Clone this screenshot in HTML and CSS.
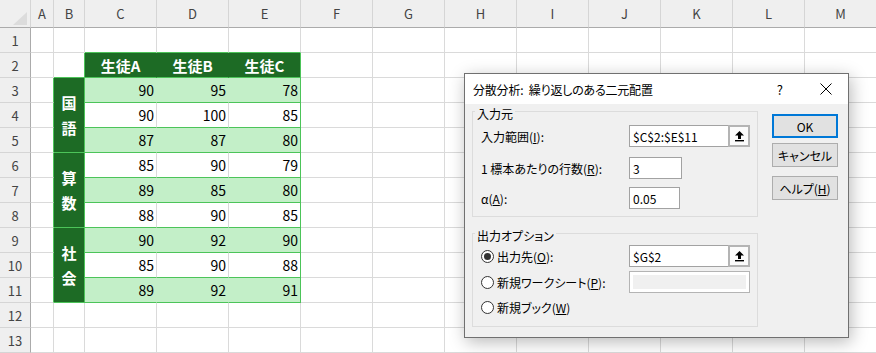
FILE: index.html
```html
<!DOCTYPE html>
<html lang="ja">
<head>
    <meta charset="UTF-8">
    <title>分散分析: 繰り返しのある二元配置</title>
    <link rel="stylesheet" href="styles.css">
</head>
<body>
    <!-- Worksheet -->
    <div class="sheet">
        <div class="corner"><svg width="30" height="27"><polygon points="27,12 27,25 13,25" fill="#dcdcdc"/></svg></div>
        <div class="col">A</div><div class="col">B</div><div class="col">C</div><div class="col">D</div><div class="col">E</div>
        <div class="col">F</div><div class="col">G</div><div class="col">H</div><div class="col">I</div><div class="col">J</div>
        <div class="col">K</div><div class="col">L</div><div class="col">M</div>

        <div class="row">1</div><div></div><div></div><div class="gb"></div><div class="gb"></div><div class="gb"></div><div class="rest"></div>

        <div class="row">2</div><div></div><div class="gb gr"></div>
        <div class="th">生徒A</div><div class="th">生徒B</div><div class="th end">生徒C</div><div class="rest"></div>

        <div class="row">3</div><div class="gr"></div><div class="subj">国<br>語</div>
        <div class="v g">90</div><div class="v g">95</div><div class="v g end">78</div><div class="rest"></div>
        <div class="row">4</div><div class="gr"></div>
        <div class="v">90</div><div class="v">100</div><div class="v end">85</div><div class="rest"></div>
        <div class="row">5</div><div class="gr"></div>
        <div class="v g">87</div><div class="v g">87</div><div class="v g end">80</div><div class="rest"></div>

        <div class="row">6</div><div class="gr"></div><div class="subj">算<br>数</div>
        <div class="v">85</div><div class="v">90</div><div class="v end">79</div><div class="rest"></div>
        <div class="row">7</div><div class="gr"></div>
        <div class="v g">89</div><div class="v g">85</div><div class="v g end">80</div><div class="rest"></div>
        <div class="row">8</div><div class="gr"></div>
        <div class="v">88</div><div class="v">90</div><div class="v end">85</div><div class="rest"></div>

        <div class="row">9</div><div class="gr"></div><div class="subj">社<br>会</div>
        <div class="v g">90</div><div class="v g">92</div><div class="v g end">90</div><div class="rest"></div>
        <div class="row">10</div><div class="gr"></div>
        <div class="v">85</div><div class="v">90</div><div class="v end">88</div><div class="rest"></div>
        <div class="row">11</div><div class="gr"></div>
        <div class="v g">89</div><div class="v g">92</div><div class="v g end">91</div><div class="rest"></div>

        <div class="row">12</div><div></div><div></div><div></div><div></div><div></div><div class="rest"></div>
        <div class="row">13</div><div></div><div></div><div></div><div></div><div></div><div class="rest"></div>
    </div>

    <!-- Analysis dialog -->
    <div class="dialog">
        <div class="titlebar">
            <span class="title">分散分析: 繰り返しのある二元配置</span>
            <span class="q">?</span>
            <svg class="close" width="12" height="12"><path d="M0.5 0.5 L11.5 11.5 M11.5 0.5 L0.5 11.5" stroke="#000" stroke-width="1"/></svg>
        </div>
        <div class="dlg-body">
            <div class="groups">
                <fieldset class="grp in">
                    <legend>入力元</legend>
                    <div class="field f1">
                        <label>入力範囲(<u>I</u>):</label>
                        <div class="range"><span>$C$2:$E$11</span><span class="pick"><svg width="11" height="12"><path d="M5.5 1 L10 5.5 H7 V9 H4 V5.5 H1 Z" fill="#000"/><rect x="1" y="10" width="9" height="1.4" fill="#000"/></svg></span></div>
                    </div>
                    <div class="field f2">
                        <label>1 標本あたりの行数(<u>R</u>):</label>
                        <div class="box w53">3</div>
                    </div>
                    <div class="field f3">
                        <label>α(<u>A</u>):</label>
                        <div class="box w51">0.05</div>
                    </div>
                </fieldset>
                <fieldset class="grp out">
                    <legend>出力オプション</legend>
                    <div class="field o1">
                        <span class="radio on"></span>
                        <label class="opt">出力先(<u>O</u>):</label>
                        <div class="range"><span>$G$2</span><span class="pick"><svg width="11" height="12"><path d="M5.5 1 L10 5.5 H7 V9 H4 V5.5 H1 Z" fill="#000"/><rect x="1" y="10" width="9" height="1.4" fill="#000"/></svg></span></div>
                    </div>
                    <div class="field o2">
                        <span class="radio"></span>
                        <label class="opt">新規ワークシート(<u>P</u>):</label>
                        <div class="range off"></div>
                    </div>
                    <div class="field o3">
                        <span class="radio"></span>
                        <label class="opt">新規ブック(<u>W</u>)</label>
                    </div>
                </fieldset>
            </div>
            <div class="buttons">
                <div class="btn ok">OK</div>
                <div class="btn cancel">キャンセル</div>
                <div class="btn help">ヘルプ(<u>H</u>)</div>
            </div>
        </div>
    </div>
</body>
</html>
```

FILE: styles.css
```css
body {
    margin: 0;
    width: 876px;
    height: 353px;
    overflow: hidden;
    position: relative;
    background: #fff;
    font-family: "Noto Sans CJK JP", sans-serif;
}

/* worksheet grid */
.sheet {
    display: grid;
    grid-template-columns: 31px 23px 31px repeat(11, 72px);
    grid-template-rows: 28px repeat(13, 25px);
    font-size: 14px;
    color: #000;
}
.sheet > div {
    display: flex;
    align-items: center;
    box-sizing: border-box;
    border-right: 1px solid #dadada;
    border-bottom: 1px solid #dadada;
}
.sheet .corner {
    background: #efefef;
    align-items: flex-start;
    border-right-color: #d5d5d5;
    border-bottom-color: #ababab;
}
.sheet .col {
    background: #efefef;
    justify-content: center;
    color: #444;
    font-size: 13px;
    border-right-color: #d5d5d5;
    border-bottom-color: #ababab;
}
.sheet .row {
    background: #efefef;
    justify-content: center;
    color: #444;
    font-size: 13px;
    border-right-color: #ababab;
    border-bottom-color: #d5d5d5;
}
.sheet .rest {
    grid-column: span 8;
    border-right: 0;
    background: repeating-linear-gradient(90deg, transparent 0 71px, #dadada 71px 72px);
}
.sheet .gb {
    border-bottom-color: #4cc459;
}
.sheet .gr {
    border-right-color: #4cc459;
}
.sheet .th {
    background: #1d6b25;
    color: #fff;
    font-weight: bold;
    font-size: 15px;
    justify-content: center;
    border-right-color: #1d6b25;
    border-bottom-color: #4cc459;
}
.sheet .subj {
    grid-row: span 3;
    flex-direction: column;
    justify-content: center;
    text-align: center;
    background: #1d6b25;
    color: #fff;
    font-weight: bold;
    font-size: 15px;
    line-height: 25px;
    border-right-color: #4cc459;
    border-bottom-color: #4cc459;
}
.sheet .v {
    justify-content: flex-end;
    padding-right: 2px;
    border-bottom-color: #4cc459;
}
.sheet .g {
    background: #c3efc8;
    border-right-color: #c3efc8;
}
.sheet .end {
    border-right-color: #4cc459;
}

/* dialog window */
.dialog {
    position: absolute;
    left: 464px;
    top: 73px;
    width: 385px;
    height: 265px;
    box-sizing: border-box;
    border: 1px solid #707070;
    background: #f0f0f0;
    box-shadow: 2px 4px 16px rgba(0, 0, 0, 0.28);
    font-size: 12px;
    color: #000;
    font-feature-settings: "palt";
}
.titlebar {
    height: 30px;
    background: #fff;
    display: flex;
    align-items: center;
    padding-left: 8px;
}
.title {
    flex: 1;
    letter-spacing: -0.2px;
    word-spacing: 3px;
}
.q {
    font-size: 13px;
    margin-right: 37px;
}
.close {
    margin-right: 16px;
}
.dlg-body {
    display: flex;
    padding: 0 10px 0 7px;
}
.groups {
    width: 286px;
}
.grp {
    margin: 0;
    padding: 0 0 7px 8px;
    border: 1px solid #dcdcdc;
    min-width: 0;
}
.grp legend {
    padding: 6px 2px 0;
    margin-left: -6px;
    line-height: 16px;
}
.grp.in {
    margin-top: -4px;
}
.grp.out {
    margin-top: 5px;
    padding-bottom: 8px;
}
.field {
    display: flex;
    align-items: center;
    height: 22px;
}
.field label {
    width: 148px;
}
.field .opt {
    width: 132px;
}
.f1 { margin-top: 3px; }
.f2 { margin-top: 10px; }
.f3 { margin-top: 8px; }
.o1 { margin-top: 1px; }
.o2 { margin-top: 4px; }
.o3 { margin-top: 3px; }

.box, .range {
    box-sizing: border-box;
    height: 22px;
    border: 1px solid #a2a2a2;
    background: #fff;
    display: flex;
    align-items: center;
    padding-left: 3px;
}
.w53 { width: 53px; }
.w51 { width: 51px; }
.range {
    width: 121px;
    padding-left: 0;
}
.range span:first-child {
    flex: 1;
    padding-left: 3px;
}
.range .pick {
    box-sizing: border-box;
    width: 22px;
    height: 22px;
    margin-right: -1px;
    border: 2px solid #b4b4b4;
    background: #fbfbfb;
    display: flex;
    align-items: center;
    justify-content: center;
}
.range.off {
    background: #f0f0f0;
    border-color: #b4b4b4;
    box-shadow: inset 0 0 0 3px #fff;
}
.radio {
    box-sizing: border-box;
    width: 13px;
    height: 13px;
    border: 1px solid #333;
    border-radius: 50%;
    background: #fff;
    margin-right: 3px;
    display: flex;
    align-items: center;
    justify-content: center;
}
.radio.on::after {
    content: "";
    width: 7px;
    height: 7px;
    border-radius: 50%;
    background: #333;
}

/* buttons */
.buttons {
    margin-left: 14px;
    margin-top: 10px;
    width: 66px;
}
.btn {
    box-sizing: border-box;
    height: 24px;
    border: 1px solid #adadad;
    background: #e1e1e1;
    display: flex;
    align-items: center;
    justify-content: center;
}
.btn.ok {
    border: 2px solid #0078d7;
}
.btn.cancel {
    margin-top: 5px;
}
.btn.help {
    margin-top: 9px;
}
```
